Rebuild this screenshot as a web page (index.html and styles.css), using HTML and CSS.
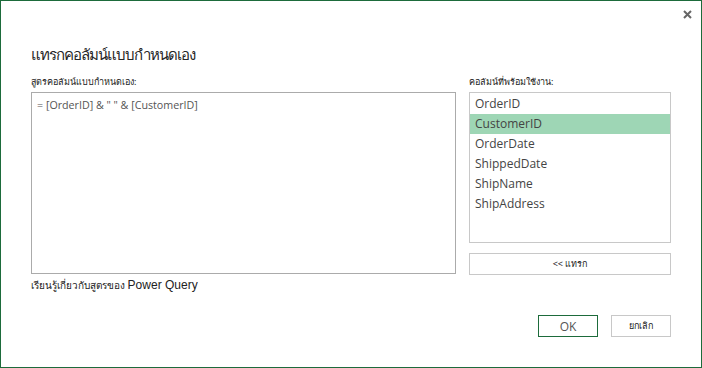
FILE: index.html
```html
<!DOCTYPE html>
<html lang="th">
<head>
  <meta charset="UTF-8">
  <title>แทรกคอลัมน์แบบกำหนดเอง</title>
  <link rel="stylesheet" href="styles.css">
</head>
<body>
  <div class="dialog">
    <button class="close" aria-label="ปิด">
      <svg width="9" height="9" viewBox="0 0 9 9">
        <path d="M1 1L8 8M8 1L1 8" stroke="#666" stroke-width="2"/>
      </svg>
    </button>
    <h1 class="title">แทรกคอลัมน์แบบกำหนดเอง</h1>
    <div class="panes">
      <div class="formula-pane">
        <div class="label">สูตรคอลัมน์แบบกำหนดเอง:</div>
        <div class="formula">= [OrderID] &amp; " " &amp; [CustomerID]</div>
        <div class="learn">เรียนรู้เกี่ยวกับสูตรของ <span class="latin">Power Query</span></div>
      </div>
      <div class="columns-pane">
        <div class="label">คอลัมน์ที่พร้อมใช้งาน:</div>
        <ul class="column-list">
          <li>OrderID</li>
          <li class="selected">CustomerID</li>
          <li>OrderDate</li>
          <li>ShippedDate</li>
          <li>ShipName</li>
          <li>ShipAddress</li>
        </ul>
        <button class="btn insert">&lt;&lt; แทรก</button>
      </div>
    </div>
    <div class="footer">
      <button class="btn ok">OK</button>
      <button class="btn">ยกเลิก</button>
    </div>
  </div>
</body>
</html>
```

FILE: styles.css
```css
body {
  margin: 0;
  background-color: #fff;
  font-family: "Noto Sans", "DejaVu Sans", sans-serif;
  color: #444;
}

.dialog {
  position: relative;
  display: flex;
  flex-direction: column;
  width: 702px;
  height: 368px;
  box-sizing: border-box;
  padding: 0 30px;
  border: 1px solid #1d6b3b;
  background-color: #fff;
}

.close {
  position: absolute;
  top: 9px;
  right: 9px;
  padding: 0;
  border: none;
  background: none;
  line-height: 0;
}

.title {
  margin: 41px 0 0;
  font-size: 15px;
  font-weight: normal;
  letter-spacing: -1px;
  line-height: 24px;
  color: #262626;
}

.panes {
  display: flex;
  gap: 13px;
  margin-top: 8px;
}

.formula-pane {
  width: 425px;
}

.columns-pane {
  width: 202px;
}

.label {
  height: 15px;
  font-size: 9px;
  line-height: 15px;
  color: #222;
}

.formula {
  height: 182px;
  box-sizing: border-box;
  margin-top: 3px;
  padding: 4px 5px;
  border: 1px solid #ababab;
  font-family: "Open Sans", sans-serif;
  font-size: 10.7px;
  line-height: 16px;
  color: #555;
}

.learn {
  margin-top: 4px;
  font-size: 10px;
  line-height: 15px;
  color: #222;
}

.latin {
  font-family: "Liberation Sans", sans-serif;
  font-size: 12px;
}

.column-list {
  height: 151px;
  box-sizing: border-box;
  margin: 3px 0 0;
  padding: 1px 0 0;
  list-style: none;
  border: 1px solid #c8c8c8;
}

.column-list li {
  height: 20px;
  padding-left: 5px;
  font-family: "Open Sans", sans-serif;
  font-size: 12px;
  line-height: 20px;
  color: #444;
}

.column-list .selected {
  background-color: #9ed6b5;
}

.btn {
  height: 22px;
  width: 60px;
  padding: 0;
  border: 1px solid #c8c8c8;
  background-color: #fff;
  font-family: "Noto Sans", "DejaVu Sans", sans-serif;
  font-size: 9px;
  color: #222;
}

.insert {
  display: block;
  width: 202px;
  margin-top: 10px;
}

.footer {
  display: flex;
  justify-content: flex-end;
  gap: 13px;
  margin-top: 22px;
}

.ok {
  border: 1px dotted #111;
  outline: 1px solid #1d6b3b;
  outline-offset: -1px;
  font-family: "Open Sans", sans-serif;
  font-size: 12px;
  color: #555;
}
```
